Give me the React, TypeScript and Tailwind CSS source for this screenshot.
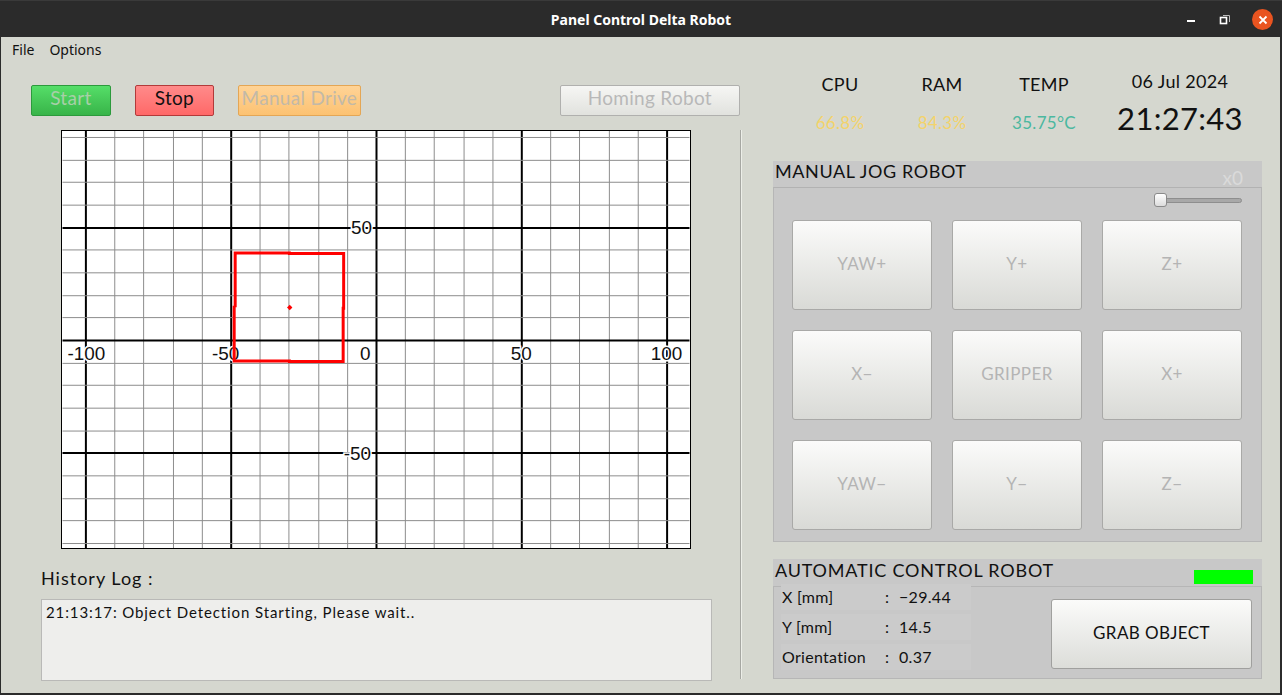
import React from "react";

const FONT = { fontFamily: "Lato, 'Noto Sans', sans-serif" };

// plot geometry (px inside svg)
const PW = 630;
const PH = 419;
const OX = 315;
const OY = 210;
const SX = 2.92;
const SY = 2.266;

function Plot() {
  const vs: number[] = [];
  for (let u = -100; u <= 100; u += 10) vs.push(u);
  const hs: number[] = [];
  for (let v = -90; v <= 90; v += 10) hs.push(v);
  const xl = [
    { v: -100, t: "-100", x: OX - 100 * SX + 1 },
    { v: -50, t: "-50", x: OX - 50 * SX - 5 },
    { v: 0, t: "0", x: OX - 16 },
    { v: 50, t: "50", x: OX + 50 * SX },
    { v: 100, t: "100", x: OX + 100 * SX },
  ];
  return (
    <svg width={PW} height={PH} className="block border border-black bg-white" viewBox={`0 0 ${PW} ${PH}`}>
      {vs.map((u) => {
        const x = Math.round(OX + u * SX) + 0.5;
        const major = u % 50 === 0;
        return (
          <line key={"v" + u} x1={x} x2={x} y1={0} y2={PH} stroke={major ? "#000" : "#8c8c8c"} strokeWidth={major ? 2 : 1} />
        );
      })}
      {hs.map((v) => {
        const y = Math.round(OY - v * SY) + 0.5;
        const major = v % 50 === 0;
        return (
          <line key={"h" + v} x1={0} x2={PW} y1={y} y2={y} stroke={major ? "#000" : "#8c8c8c"} strokeWidth={major ? 2 : 1} />
        );
      })}
      <g fontFamily="'Liberation Sans', Arial, sans-serif" fontSize={19} fill="#111" stroke="#fff" strokeWidth={3} paintOrder="stroke">
        {xl.map((l) => (
          <text key={l.t} x={l.x} y={OY + 20} textAnchor={l.v === 0 ? "start" : "middle"}>
            {l.t}
          </text>
        ))}
        <text x={OX - 4} y={OY - 50 * SY + 7} textAnchor="end">50</text>
        <text x={OX - 5} y={OY + 50 * SY + 7} textAnchor="end">-50</text>
      </g>
      <polyline
        points="173.5,177 173.5,122.5 228,122.5 228,123 282.5,123 282.5,178 282,178 282,231.5 228,231.5 228,231 172.5,231 172.5,177 173.5,177"
        fill="none"
        stroke="#ff0000"
        strokeWidth={3}
      />
      <path d="M228.3 174.5 L231 177.3 L228.3 180 L225.6 177.3 Z" fill="#ff0000" />
    </svg>
  );
}

function TopButton({ label, cls, w }: { label: string; cls: string; w: string }) {
  return (
    <div className={`h-[31px] ${w} flex items-center justify-center pb-[4px] rounded-[2px] border text-[19px] tracking-[0.3px] ${cls}`}>
      {label}
    </div>
  );
}

function JogButton({ label, w }: { label: string; w: string }) {
  return (
    <div className={`h-[90px] ${w} flex items-center justify-center pb-[2px] rounded-[3px] border border-[#a9a9a7] bg-gradient-to-b from-[#fbfbfa] to-[#d9dad6] text-[17px] tracking-[0.4px] text-[#b4b4b4]`}>
      {label}
    </div>
  );
}

function Stat({ name, value, color }: { name: string; value: string; color: string }) {
  return (
    <div className="w-[102px] flex flex-col items-center">
      <div className="text-[18px] text-[#111] leading-[22px] tracking-[0.3px]">{name}</div>
      <div className={`mt-[17px] text-[17px] leading-[22px] tracking-[0.3px] ${color}`}>{value}</div>
    </div>
  );
}

function InfoRow({ k, v }: { k: string; v: string }) {
  return (
    <div className="flex h-[30px] items-center text-[16px] text-[#111] tracking-[0.3px]">
      <div className="w-[104px] h-[26px] pl-[1px] flex items-center bg-[#cbcbcb]">{k}</div>
      <div className="w-[14px] h-[26px] flex items-center bg-[#cbcbcb]">:</div>
      <div className="w-[72px] h-[26px] flex items-center bg-[#cbcbcb]">{v}</div>
    </div>
  );
}

export default function App() {
  return (
    <div className="w-[1282px] h-[695px] flex flex-col bg-[#2b2b2b] overflow-hidden" style={FONT}>
      {/* title bar */}
      <div className="h-[37px] shrink-0 relative flex items-center justify-center border-t border-[#3a3a3a]">
        <span className="text-white text-[14px] font-bold" style={{ fontFamily: "'Noto Sans', sans-serif" }}>
          Panel Control Delta Robot
        </span>
        <div className="absolute right-[9px] top-[8px] flex items-center gap-[21px]">
          <div className="w-[8px] h-[2px] bg-white mt-[3px]" />
          <svg width="12" height="12" viewBox="0 0 12 12" className="ml-[3px]">
            <rect x="1.5" y="3.5" width="6" height="6" fill="none" stroke="#fff" strokeWidth="1.6" />
            <path d="M4 1.5 H10.5 V8" fill="none" stroke="#bbb" strokeWidth="1" />
          </svg>
          <div className="w-[21px] h-[21px] rounded-full bg-[#e95420] flex items-center justify-center">
            <svg width="10" height="10" viewBox="0 0 10 10">
              <path d="M1.5 1.5 L8.5 8.5 M8.5 1.5 L1.5 8.5" stroke="#fff" strokeWidth="1.8" />
            </svg>
          </div>
        </div>
      </div>

      {/* window body */}
      <div className="flex-1 mx-[1px] mb-[2px] mr-[2px] bg-[#d5d7cf] flex flex-col">
        <div className="h-[24px] flex items-center gap-[15px] pl-[11px] text-[14px] text-[#111]" style={{ fontFamily: "'Noto Sans', sans-serif" }}>
          <span>File</span>
          <span>Options</span>
        </div>

        <div className="flex flex-1">
          {/* left column */}
          <div className="w-[739px] pl-[30px] pt-[24px] flex flex-col">
            <div className="flex items-center">
              <TopButton label="Start" w="w-[80px]" cls="border-[#2c9a3c] bg-gradient-to-b from-[#55de68] to-[#38b449] text-[#a8cfa8]" />
              <div className="w-[24px]" />
              <TopButton label="Stop" w="w-[80px]" cls="border-[#b23a3a] bg-gradient-to-b from-[#ff8a8a] to-[#ff6868] text-[#111]" />
              <div className="w-[24px]" />
              <TopButton label="Manual Drive" w="w-[123px]" cls="border-[#e4a655] bg-gradient-to-b from-[#ffd396] to-[#fcc272] text-[#c2b9a8]" />
              <div className="w-[200px]" />
              <TopButton label="Homing Robot" w="w-[181px]" cls="border-[#b0b0ae] bg-gradient-to-b from-[#f6f6f4] to-[#e1e2de] text-[#b8b8b8]" />
            </div>
            <div className="mt-[14px] ml-[30px]">
              <Plot />
            </div>
            <div className="mt-[18px] ml-[10px] text-[18px] text-[#111] leading-[22px] tracking-[1px]">History Log :</div>
            <div className="mt-[10px] ml-[10px] w-[671px] h-[82px] border border-[#b9b9b7] bg-[#eeeeec] px-[4px] pt-px text-[15px] tracking-[0.9px] text-[#111]">
              21:13:17: Object Detection Starting, Please wait..
            </div>
          </div>

          {/* separator */}
          <div className="w-[2px] mt-[69px] mb-[14px] border-l border-[#a6a7a2] border-r border-r-[#eceee8]" />

          {/* right column */}
          <div className="flex-1 flex flex-col pl-[31px]">
            <div className="flex pl-[16px] pt-[12px]">
              <Stat name="CPU" value="66.8%" color="text-[#f3d36a]" />
              <Stat name="RAM" value="84.3%" color="text-[#f3d36a]" />
              <Stat name="TEMP" value="35.75°C" color="text-[#4bb8a0]" />
              <div className="w-[170px] flex flex-col items-center">
                <div className="text-[18px] text-[#111] leading-[22px] -mt-[3px] tracking-[0.3px]">06 Jul 2024</div>
                <div className="text-[31px] text-[#111] leading-[36px] mt-[8px] tracking-[0.3px]">21:27:43</div>
              </div>
            </div>

            {/* manual jog */}
            <div className="mt-[25px] w-[489px] h-[381px] bg-[#c8c8c8] flex flex-col relative">
              <div className="h-[27px] pl-[2px] flex items-start -mt-px text-[18px] leading-[22px] text-[#111] tracking-[0.6px]">MANUAL JOG ROBOT</div>
              <div className="absolute right-[19px] top-[7px] text-[19px] text-[#dadada] leading-[20px]">x0</div>
              <div className="flex-1 border border-[#b6b6b6] border-t-[#b2b2b2] flex flex-col px-[18px]">
                <div className="h-[32px] flex items-start pt-[5px] justify-end pr-[1px]">
                  <div className="relative w-[88px] h-[14px] flex items-center">
                    <div className="absolute left-[8px] right-0 h-[5px] rounded-full bg-[#a8a8a8] border border-[#8e8e8e]" />
                    <div className="relative w-[13px] h-[14px] rounded-[3px] border border-[#8a8a8a] bg-gradient-to-b from-[#ffffff] to-[#dcdcdc]" />
                  </div>
                </div>
                <div className="grid grid-cols-[140px_130px_140px] gap-x-[20px] gap-y-[20px]">
                  <JogButton label="YAW+" w="w-[140px]" />
                  <JogButton label="Y+" w="w-[130px]" />
                  <JogButton label="Z+" w="w-[140px]" />
                  <JogButton label="X−" w="w-[140px]" />
                  <JogButton label="GRIPPER" w="w-[130px]" />
                  <JogButton label="X+" w="w-[140px]" />
                  <JogButton label="YAW−" w="w-[140px]" />
                  <JogButton label="Y−" w="w-[130px]" />
                  <JogButton label="Z−" w="w-[140px]" />
                </div>
              </div>
            </div>

            {/* automatic control */}
            <div className="mt-[17px] w-[489px] h-[120px] bg-[#c8c8c8] flex flex-col">
              <div className="h-[27px] pl-[2px] pr-[9px] flex items-start justify-between text-[18px] leading-[22px] text-[#111] tracking-[0.8px]">
                <span>AUTOMATIC CONTROL ROBOT</span>
                <div className="w-[59px] h-[14px] bg-[#00ff00] mt-[11px]" />
              </div>
              <div className="flex-1 border border-[#b6b6b6] flex items-start pl-[7px] pr-[9px]">
                <div className="flex flex-col -mt-[5px]">
                  <InfoRow k="X [mm]" v="−29.44" />
                  <InfoRow k="Y [mm]" v="14.5" />
                  <InfoRow k="Orientation" v="0.37" />
                </div>
                <div className="ml-auto mt-[12px] w-[201px] h-[70px] pb-[2px] rounded-[3px] border border-[#a0a09e] bg-gradient-to-b from-[#fbfbfa] to-[#dcddd9] flex items-center justify-center text-[17px] tracking-[0.4px] text-[#111]">
                  GRAB OBJECT
                </div>
              </div>
            </div>
          </div>
        </div>
      </div>
    </div>
  );
}
